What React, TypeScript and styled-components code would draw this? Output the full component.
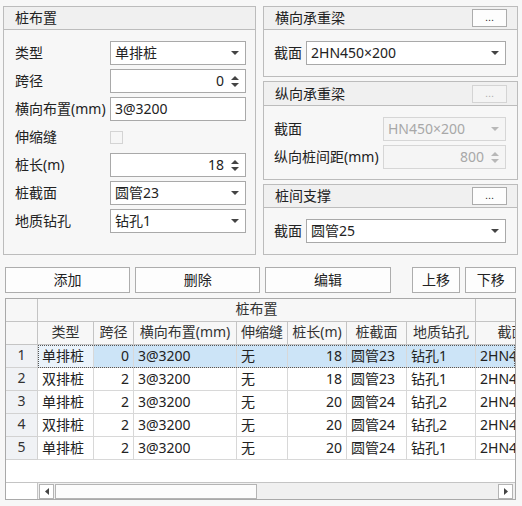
import React from "react";
import styled, { createGlobalStyle } from "styled-components";

const FONT = `"Noto Sans", "Noto Sans CJK SC", sans-serif`;

const GlobalStyle = createGlobalStyle`
  html, body {
    margin: 0;
    padding: 0;
    background: #f7f7f7;
  }
  body {
    font-family: ${FONT};
    font-size: 14px;
    color: #222;
  }
`;

const Page = styled.div`
  width: 522px;
  height: 506px;
  box-sizing: border-box;
  padding: 6px 0 0 3px;
  display: flex;
  flex-direction: column;
`;

const Top = styled.div`
  display: grid;
  grid-template-columns: 253px 255px;
  column-gap: 7px;
  height: 249px;
`;

const RightCol = styled.div`
  display: flex;
  flex-direction: column;
  gap: 4px;
`;

const Panel = styled.div<{ $h: number }>`
  box-sizing: border-box;
  height: ${(p) => p.$h}px;
  border: 1px solid #bcbcbc;
  background: #f7f7f7;
  display: flex;
  flex-direction: column;
`;

const PanelHead = styled.div<{ $h?: number }>`
  box-sizing: border-box;
  height: ${(p) => p.$h ?? 23}px;
  flex-shrink: 0;
  background: #f0f0f0;
  border-bottom: 1px solid #bcbcbc;
  display: flex;
  align-items: center;
  justify-content: space-between;
  padding: 0 10px 0 11px;
  line-height: 20px;
`;

const DotsButton = styled.button<{ $disabled?: boolean }>`
  width: 35px;
  height: 18px;
  box-sizing: border-box;
  padding: 0 0 4px;
  border: 1px solid ${(p) => (p.$disabled ? "#d4d4d4" : "#acacac")};
  background: ${(p) => (p.$disabled ? "#f4f4f4" : "#fdfdfd")};
  color: ${(p) => (p.$disabled ? "#b0b0b0" : "#333")};
  font-family: "Liberation Sans", sans-serif;
  font-size: 11px;
  line-height: 10px;
  display: flex;
  align-items: flex-end;
  justify-content: center;
`;

const FormGrid = styled.div<{ $cols: string; $pad: string }>`
  display: grid;
  grid-template-columns: ${(p) => p.$cols};
  grid-auto-rows: 24px;
  row-gap: 4px;
  padding: ${(p) => p.$pad};
  align-items: center;
`;

const Label = styled.div`
  line-height: 20px;
  white-space: nowrap;
  color: #222;
`;

const Field = styled.div<{ $disabled?: boolean }>`
  box-sizing: border-box;
  height: 24px;
  border: 1px solid ${(p) => (p.$disabled ? "#d6d6d6" : "#a9a9a9")};
  background: ${(p) => (p.$disabled ? "#f5f5f5" : "#fff")};
  color: ${(p) => (p.$disabled ? "#a8a8a8" : "#222")};
  display: flex;
  align-items: center;
  padding: 0 4px;
  line-height: 20px;
  white-space: nowrap;
`;

const FieldText = styled.span<{ $right?: boolean }>`
  flex: 1;
  text-align: ${(p) => (p.$right ? "right" : "left")};
  padding-right: ${(p) => (p.$right ? "6px" : "0")};
`;

const ArrowBox = styled.span`
  width: 10px;
  display: flex;
  flex-direction: column;
  align-items: center;
  justify-content: center;
  gap: 3px;
  margin-right: 1px;
`;

const CheckBox = styled.div`
  width: 13px;
  height: 13px;
  box-sizing: border-box;
  border: 1px solid #d4d4d4;
  background: #f6f6f6;
`;

const Down = ({ c = "#444" }: { c?: string }) => (
  <svg width="8" height="4" viewBox="0 0 8 4">
    <polygon points="0,0 8,0 4,4" fill={c} />
  </svg>
);

const Up = ({ c = "#444" }: { c?: string }) => (
  <svg width="8" height="4" viewBox="0 0 8 4">
    <polygon points="0,4 8,4 4,0" fill={c} />
  </svg>
);

const Combo = ({ value, disabled }: { value: string; disabled?: boolean }) => (
  <Field $disabled={disabled}>
    <FieldText>{value}</FieldText>
    <ArrowBox>
      <Down c={disabled ? "#b8b8b8" : "#444"} />
    </ArrowBox>
  </Field>
);

const Spin = ({ value, disabled }: { value: string; disabled?: boolean }) => (
  <Field $disabled={disabled}>
    <FieldText $right>{value}</FieldText>
    <ArrowBox>
      <Up c={disabled ? "#b8b8b8" : "#444"} />
      <Down c={disabled ? "#b8b8b8" : "#444"} />
    </ArrowBox>
  </Field>
);

const TextBox = ({ value }: { value: string }) => (
  <Field>
    <FieldText>{value}</FieldText>
  </Field>
);

/* bottom part */

const Bottom = styled.div`
  margin-top: 12px;
  padding-left: 2px;
  display: flex;
  flex-direction: column;
  gap: 5px;
  width: 511px;
`;

const Toolbar = styled.div`
  display: flex;
  gap: 5px;
  height: 26px;
`;

const ToolButton = styled.button<{ $w: number; $gapBefore?: number }>`
  width: ${(p) => p.$w}px;
  height: 26px;
  box-sizing: border-box;
  margin-left: ${(p) => p.$gapBefore ?? 0}px;
  border: 1px solid #adadad;
  background: #fdfdfd;
  color: #222;
  font-family: ${FONT};
  font-size: 14px;
  line-height: 20px;
  padding: 0;
`;

const TableFrame = styled.div`
  box-sizing: border-box;
  height: 202px;
  border: 1px solid #a9a9a9;
  background: #fff;
  display: flex;
  flex-direction: column;
`;

const Viewport = styled.div`
  flex: 1;
  overflow: hidden;
`;

const Row = styled.div`
  display: flex;
  height: 23px;
`;

const Corner = styled.div`
  box-sizing: border-box;
  width: 32px;
  flex-shrink: 0;
  border-right: 1px solid #c4c4c4;
  border-bottom: 1px solid #c4c4c4;
  background: #f7f7f7;
`;

const RowHead = styled(Corner)`
  background: #f0f2f5;
  border-color: #d2d2d2;
  color: #333;
  text-align: center;
  line-height: 19px;
`;

const COLS = "56px 40px 103px 51px 59px 60px 69px 72px";

const Cells = styled.div<{ $selected?: boolean }>`
  flex: 1;
  min-width: 0;
  overflow: hidden;
  display: grid;
  grid-template-columns: ${COLS};
  position: relative;
  background: ${(p) => (p.$selected ? "#cce4f7" : "#fff")};
  &::after {
    content: "";
    display: ${(p) => (p.$selected ? "block" : "none")};
    position: absolute;
    inset: 0;
    border: 1px dotted #555;
    pointer-events: none;
  }
`;

const HeadCell = styled.div<{ $span?: number }>`
  box-sizing: border-box;
  grid-column: span ${(p) => p.$span ?? 1};
  height: 23px;
  border-right: 1px solid #c4c4c4;
  border-bottom: 1px solid #c4c4c4;
  background: #f7f7f7;
  color: #333;
  text-align: center;
  line-height: 20px;
  white-space: nowrap;
  overflow: hidden;
`;

const Cell = styled.div<{ $right?: boolean; $current?: boolean }>`
  box-sizing: border-box;
  height: 23px;
  border-right: 1px solid #d8d8d8;
  border-bottom: 1px solid #d8d8d8;
  padding: 0 4px;
  text-align: ${(p) => (p.$right ? "right" : "left")};
  line-height: 21px;
  white-space: nowrap;
  overflow: hidden;
  color: #222;
  background: ${(p) => (p.$current ? "#eaf3fb" : "transparent")};
`;

const ScrollRow = styled.div`
  display: flex;
  height: 17px;
  border-top: 1px solid #c4c4c4;
  box-sizing: border-box;
  flex-shrink: 0;
`;

const ScrollCorner = styled.div`
  width: 32px;
  box-sizing: border-box;
  border-right: 1px solid #c4c4c4;
  background: #fff;
`;

const Track = styled.div`
  flex: 1;
  background: #f0f0f0;
  display: flex;
  align-items: center;
  padding: 0 2px 0 1px;
  gap: 1px;
`;

const ScrollBtn = styled.div`
  width: 15px;
  height: 15px;
  box-sizing: border-box;
  border: 1px solid #b4b4b4;
  background: #fff;
  display: flex;
  align-items: center;
  justify-content: center;
`;

const Thumb = styled.div<{ $w: number }>`
  width: ${(p) => p.$w}px;
  height: 15px;
  box-sizing: border-box;
  border: 1px solid #b4b4b4;
  background: #fcfcfc;
`;

const Fill = styled.div`
  flex: 1;
`;

const headers = ["类型", "跨径", "横向布置(mm)", "伸缩缝", "桩长(m)", "桩截面", "地质钻孔", "截面"];

const rows = [
  ["单排桩", "0", "3@3200", "无", "18", "圆管23", "钻孔1", "2HN450×200"],
  ["双排桩", "2", "3@3200", "无", "18", "圆管23", "钻孔1", "2HN450×200"],
  ["单排桩", "2", "3@3200", "无", "20", "圆管24", "钻孔2", "2HN450×200"],
  ["双排桩", "2", "3@3200", "无", "20", "圆管24", "钻孔2", "2HN450×200"],
  ["单排桩", "2", "3@3200", "无", "20", "圆管24", "钻孔1", "2HN450×200"],
];

const rightCols = new Set([1, 4]);

export default function App() {
  return (
    <>
      <GlobalStyle />
      <Page>
        <Top>
          <Panel $h={249}>
            <PanelHead>桩布置</PanelHead>
            <FormGrid $cols="95px 136px" $pad="11px 9px 0 11px">
              <Label>类型</Label>
              <Combo value="单排桩" />
              <Label>跨径</Label>
              <Spin value="0" />
              <Label>横向布置(mm)</Label>
              <TextBox value="3@3200" />
              <Label>伸缩缝</Label>
              <CheckBox />
              <Label>桩长(m)</Label>
              <Spin value="18" />
              <Label>桩截面</Label>
              <Combo value="圆管23" />
              <Label>地质钻孔</Label>
              <Combo value="钻孔1" />
            </FormGrid>
          </Panel>
          <RightCol>
            <Panel $h={71}>
              <PanelHead>
                横向承重梁
                <DotsButton>...</DotsButton>
              </PanelHead>
              <FormGrid $cols="32px 200px" $pad="11px 11px 0 10px">
                <Label>截面</Label>
                <Combo value="2HN450×200" />
              </FormGrid>
            </Panel>
            <Panel $h={99}>
              <PanelHead $h={24}>
                纵向承重梁
                <DotsButton $disabled>...</DotsButton>
              </PanelHead>
              <FormGrid $cols="109px 123px" $pad="11px 11px 0 10px">
                <Label>截面</Label>
                <Combo value="HN450×200" disabled />
                <Label>纵向桩间距(mm)</Label>
                <Spin value="800" disabled />
              </FormGrid>
            </Panel>
            <Panel $h={71}>
              <PanelHead>
                桩间支撑
                <DotsButton>...</DotsButton>
              </PanelHead>
              <FormGrid $cols="32px 200px" $pad="11px 11px 0 10px">
                <Label>截面</Label>
                <Combo value="圆管25" />
              </FormGrid>
            </Panel>
          </RightCol>
        </Top>
        <Bottom>
          <Toolbar>
            <ToolButton $w={126}>添加</ToolButton>
            <ToolButton $w={126}>删除</ToolButton>
            <ToolButton $w={126}>编辑</ToolButton>
            <ToolButton $w={49} $gapBefore={16}>上移</ToolButton>
            <ToolButton $w={51}>下移</ToolButton>
          </Toolbar>
          <TableFrame>
            <Viewport>
              <Row>
                <Corner />
                <Cells>
                  <HeadCell $span={7}>桩布置</HeadCell>
                  <HeadCell />
                </Cells>
              </Row>
              <Row>
                <Corner />
                <Cells>
                  {headers.map((h) => (
                    <HeadCell key={h}>{h}</HeadCell>
                  ))}
                </Cells>
              </Row>
              {rows.map((r, i) => (
                <Row key={i}>
                  <RowHead>{i + 1}</RowHead>
                  <Cells $selected={i === 0}>
                    {r.map((v, j) => (
                      <Cell key={j} $right={rightCols.has(j)} $current={i === 0 && j === 0}>
                        {v}
                      </Cell>
                    ))}
                  </Cells>
                </Row>
              ))}
            </Viewport>
            <ScrollRow>
              <ScrollCorner />
              <Track>
                <ScrollBtn>
                  <svg width="4" height="7" viewBox="0 0 4 7">
                    <polygon points="4,0 4,7 0,3.5" fill="#444" />
                  </svg>
                </ScrollBtn>
                <Thumb $w={202} />
                <Fill />
                <ScrollBtn>
                  <svg width="4" height="7" viewBox="0 0 4 7">
                    <polygon points="0,0 0,7 4,3.5" fill="#444" />
                  </svg>
                </ScrollBtn>
              </Track>
            </ScrollRow>
          </TableFrame>
        </Bottom>
      </Page>
    </>
  );
}
